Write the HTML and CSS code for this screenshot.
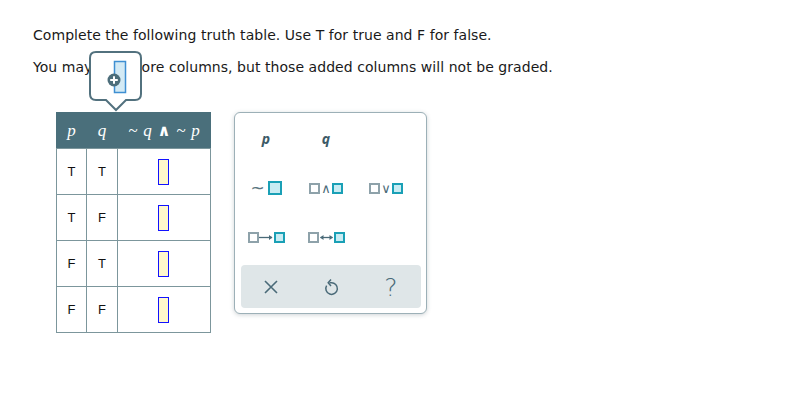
FILE: index.html
```html
<!DOCTYPE html>
<html>
<head>
<meta charset="utf-8">
<link rel="stylesheet" href="styles.css">
</head>
<body>
<div class="page">
  <p class="line line1">Complete the following truth table. Use T for true and F for false.</p>
  <p class="line line2">You may add more columns, but those added columns will not be graded.</p>

  <div class="addcol">
    <svg width="60" height="64" viewBox="0 0 60 64">
      <path d="M7 1 H46 Q52 1 52 7 V43 Q52 49 46 49 H37 L27 59 L17 49 H7 Q1 49 1 43 V7 Q1 1 7 1 Z" fill="#fff" stroke="#52717e" stroke-width="2"/>
      <rect x="25.5" y="10.5" width="11" height="31" fill="#d3eaf5" stroke="#3f8fd2" stroke-width="1.5"/>
      <circle cx="25" cy="29" r="6.5" fill="#4d6e7b"/>
      <path d="M25 25.2 V32.8 M21.2 29 H28.8" stroke="#fff" stroke-width="2"/>
    </svg>
  </div>

  <div class="work">
    <table class="truth">
      <thead>
        <tr><th class="c1">p</th><th class="c2">q</th><th class="c3">~ q <b class="and">∧</b> ~ p</th></tr>
      </thead>
      <tbody>
        <tr><td>T</td><td>T</td><td><span class="slot"></span></td></tr>
        <tr><td>T</td><td>F</td><td><span class="slot"></span></td></tr>
        <tr><td>F</td><td>T</td><td><span class="slot"></span></td></tr>
        <tr><td>F</td><td>F</td><td><span class="slot"></span></td></tr>
      </tbody>
    </table>

    <div class="pad">
      <div class="keys">
        <div class="key var">p</div>
        <div class="key var">q</div>
        <div class="key"></div>
        <div class="key"><span class="tilde">~</span><span class="box fill big"></span></div>
        <div class="key"><span class="box empty"></span><span class="op">∧</span><span class="box fill"></span></div>
        <div class="key"><span class="box empty"></span><span class="op">∨</span><span class="box fill"></span></div>
        <div class="key"><span class="box empty"></span><svg class="arrow" width="15" height="7" viewBox="0 0 15 7"><path d="M0 3.5 H13" stroke="#4a6a78" stroke-width="1.3"/><path d="M10 1 L13.5 3.5 L10 6 Z" fill="#4a6a78"/></svg><span class="box fill"></span></div>
        <div class="key"><span class="box empty"></span><svg class="arrow" width="15" height="7" viewBox="0 0 15 7"><path d="M1.5 3.5 H13.5" stroke="#4a6a78" stroke-width="1.3"/><path d="M4.5 1 L1 3.5 L4.5 6 Z M10.5 1 L14 3.5 L10.5 6 Z" fill="#4a6a78"/></svg><span class="box fill"></span></div>
        <div class="key"></div>
      </div>
      <div class="bar">
        <div class="btn">
          <svg width="16" height="16" viewBox="0 0 16 16"><path d="M2 2 L14 14 M14 2 L2 14" stroke="#4a6a78" stroke-width="1.6"/></svg>
        </div>
        <div class="btn">
          <svg width="16" height="18" viewBox="0 0 16 18"><path d="M3.6 7.6 A5.8 5.8 0 1 0 8 4.8 H6.5" fill="none" stroke="#4a6a78" stroke-width="1.5"/><path d="M8 1.6 L5.2 4.8 L8 8" fill="none" stroke="#4a6a78" stroke-width="1.5"/></svg>
        </div>
        <div class="btn q">?</div>
      </div>
    </div>
  </div>
</div>
</body>
</html>
```

FILE: styles.css
```css
html, body {
  margin: 0;
  padding: 0;
  background: #fff;
}

.page {
  position: relative;
  padding: 27px 0 0 33px;
  font-family: "DejaVu Sans", Verdana, sans-serif;
  color: #1a1a1a;
}

.line {
  margin: 0;
  font-size: 14px;
  line-height: 16px;
  letter-spacing: 0.05px;
}

.line2 {
  margin-top: 16px;
}

.addcol {
  position: absolute;
  left: 89px;
  top: 51px;
  width: 60px;
  height: 64px;
}

.addcol svg {
  display: block;
}

.work {
  display: flex;
  align-items: flex-start;
  gap: 23px;
  margin: 37px 0 0 23px;
}

.truth {
  border-collapse: collapse;
  font-family: "Liberation Sans", Arial, sans-serif;
}

.truth th {
  background: #4a6f7b;
  color: #fff;
  font-family: "Liberation Serif", "Times New Roman", serif;
  font-style: italic;
  font-weight: normal;
  font-size: 17px;
  height: 35px;
  padding: 0;
  border: 1px solid #4a6f7b;
  border-bottom-color: #7c969c;
}

.truth .and {
  font-style: normal;
  font-weight: bold;
  font-family: "DejaVu Sans", sans-serif;
  font-size: 16px;
}

.truth .c1 { width: 29px; }
.truth .c2 { width: 30px; }
.truth .c3 { width: 92px; word-spacing: 1.5px; }

.truth td {
  border: 1px solid #7c969c;
  height: 45px;
  padding: 0;
  text-align: center;
  font-size: 13px;
  color: #111;
}

.slot {
  display: inline-block;
  width: 9px;
  height: 24px;
  background: #fff8cc;
  border: 1px solid #1212ff;
  vertical-align: middle;
  margin-left: -1px;
}

.pad {
  width: 191px;
  height: 200px;
  border: 1px solid #9cb0b7;
  border-radius: 6px;
  box-shadow: 0 1px 4px rgba(60, 80, 90, 0.25);
  display: flex;
  flex-direction: column;
  background: #fff;
}

.keys {
  display: grid;
  grid-template-columns: 60px 60px 60px;
  grid-template-rows: 50px 50px 48px;
  padding: 0 0 0 1px;
}

.key {
  display: flex;
  align-items: center;
  justify-content: center;
  color: #3c5a67;
}

.key.var {
  font-family: "Open Sans", "DejaVu Sans", sans-serif;
  font-weight: bold;
  font-style: italic;
  font-size: 14px;
}

.tilde {
  font-size: 17px;
  color: #5a7580;
  margin-right: 3px;
  font-family: "DejaVu Sans", sans-serif;
}

.box {
  display: inline-block;
  box-sizing: border-box;
  width: 11px;
  height: 11px;
}

.box.empty {
  border: 2px solid #8ea2aa;
  background: #fff;
}

.box.fill {
  border: 2px solid #1aa0b6;
  background: #c9ecf3;
}

.box.big {
  width: 14px;
  height: 14px;
}

.op {
  font-family: "DejaVu Sans", sans-serif;
  font-size: 13px;
  color: #4a6a78;
  margin: 0 1px;
}

.arrow {
  display: block;
}

.bar {
  margin: auto 5px 5px 6px;
  height: 43px;
  background: #dfe6e8;
  border-radius: 4px;
  display: grid;
  grid-template-columns: 1fr 1fr 1fr;
}

.btn {
  display: flex;
  align-items: center;
  justify-content: center;
  color: #4a6a78;
}

.btn.q {
  font-family: "DejaVu Sans", sans-serif;
  font-size: 25px;
  font-weight: 200;
  padding-top: 1px;
}
```
